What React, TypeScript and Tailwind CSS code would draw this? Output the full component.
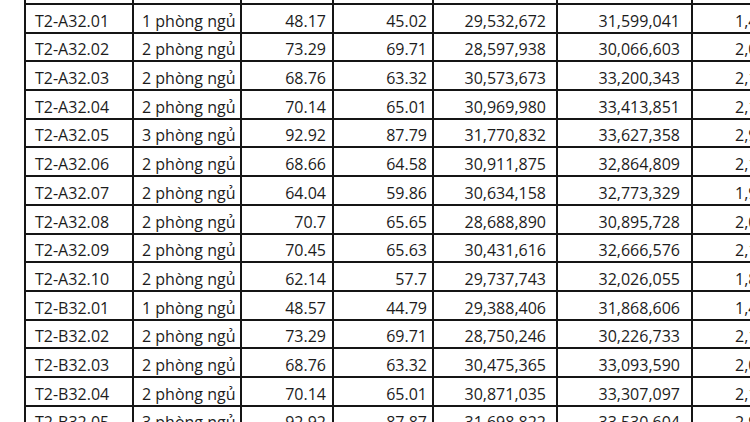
const rows: [string, string, string, string, string, string][] = [
  ['T2-A32.01', '1 phòng ngủ', '48.17', '45.02', '29,532,672', '31,599,041'],
  ['T2-A32.02', '2 phòng ngủ', '73.29', '69.71', '28,597,938', '30,066,603'],
  ['T2-A32.03', '2 phòng ngủ', '68.76', '63.32', '30,573,673', '33,200,343'],
  ['T2-A32.04', '2 phòng ngủ', '70.14', '65.01', '30,969,980', '33,413,851'],
  ['T2-A32.05', '3 phòng ngủ', '92.92', '87.79', '31,770,832', '33,627,358'],
  ['T2-A32.06', '2 phòng ngủ', '68.66', '64.58', '30,911,875', '32,864,809'],
  ['T2-A32.07', '2 phòng ngủ', '64.04', '59.86', '30,634,158', '32,773,329'],
  ['T2-A32.08', '2 phòng ngủ', '70.7', '65.65', '28,688,890', '30,895,728'],
  ['T2-A32.09', '2 phòng ngủ', '70.45', '65.63', '30,431,616', '32,666,576'],
  ['T2-A32.10', '2 phòng ngủ', '62.14', '57.7', '29,737,743', '32,026,055'],
  ['T2-B32.01', '1 phòng ngủ', '48.57', '44.79', '29,388,406', '31,868,606'],
  ['T2-B32.02', '2 phòng ngủ', '73.29', '69.71', '28,750,246', '30,226,733'],
  ['T2-B32.03', '2 phòng ngủ', '68.76', '63.32', '30,475,365', '33,093,590'],
  ['T2-B32.04', '2 phòng ngủ', '70.14', '65.01', '30,871,035', '33,307,097'],
  ['T2-B32.05', '3 phòng ngủ', '92.92', '87.87', '31,698,822', '33,530,604'],
]

// tổng giá = diện tích thông thủy x đơn giá thông thủy
function total(net: string, price: string) {
  const v = Math.round(parseFloat(net) * parseInt(price.replace(/,/g, ''), 10))
  return v.toLocaleString('en-US')
}

const cell = 'bg-white flex items-end pb-[3px] leading-[16px] whitespace-nowrap overflow-hidden'

export default function App() {
  return (
    <div
      className="w-[750px] h-[422px] overflow-hidden bg-white text-[16px] text-[#1c1c1c]"
      style={{ fontFamily: '"Open Sans", "Noto Sans", sans-serif' }}
    >
      <div className="ml-[24px] mt-[-23.7px] w-max px-[2px] bg-[#151515] grid grid-cols-[106px_106px_90px_98px_122px_133px_170px] auto-rows-[26.7px] gap-[2px]">
        {/* dòng trên bị cắt */}
        <div className={cell} />
        <div className={cell} />
        <div className={cell} />
        <div className={cell} />
        <div className={cell} />
        <div className={cell} />
        <div className={cell} />
        {rows.map((r) => (
          <div key={r[0]} className="contents">
            <div className={`${cell} pl-[9px]`}>{r[0]}</div>
            <div className={`${cell} pl-[8px]`}>{r[1]}</div>
            <div className={`${cell} justify-end pr-[6px]`}>{r[2]}</div>
            <div className={`${cell} justify-end pr-[5px]`}>{r[3]}</div>
            <div className={`${cell} justify-end pr-[10px]`}>{r[4]}</div>
            <div className={`${cell} justify-end pr-[11px]`}>{r[5]}</div>
            <div className={`${cell} justify-start pl-[42px]`}>{total(r[3], r[5])}</div>
          </div>
        ))}
      </div>
    </div>
  )
}
